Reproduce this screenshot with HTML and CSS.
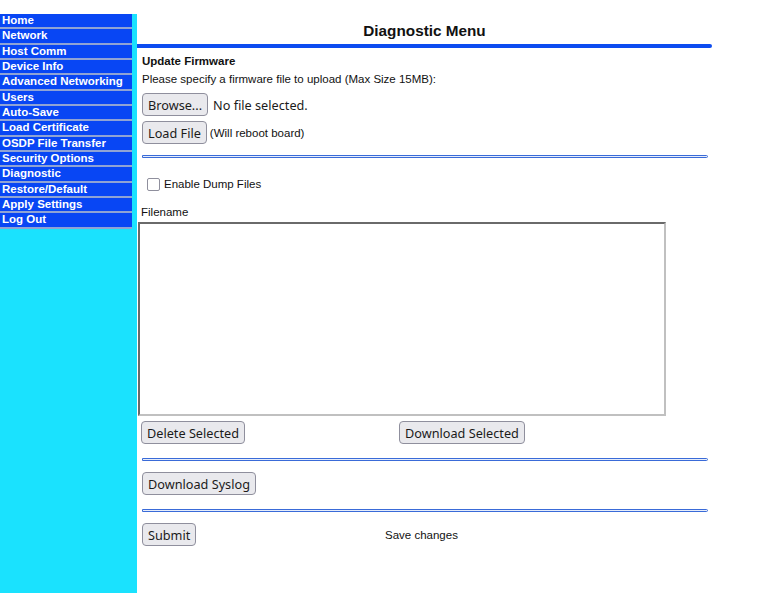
FILE: index.html
```html
<!DOCTYPE html>
<html>
<head>
<meta charset="utf-8">
<title>Diagnostic Menu</title>
<link rel="stylesheet" href="styles.css">
</head>
<body>
<div class="page">
  <nav class="side">
    <a class="item" href="#">Home</a>
    <a class="item" href="#">Network</a>
    <a class="item" href="#">Host Comm</a>
    <a class="item" href="#">Device Info</a>
    <a class="item" href="#">Advanced Networking</a>
    <a class="item" href="#">Users</a>
    <a class="item" href="#">Auto-Save</a>
    <a class="item" href="#">Load Certificate</a>
    <a class="item" href="#">OSDP File Transfer</a>
    <a class="item" href="#">Security Options</a>
    <a class="item" href="#">Diagnostic</a>
    <a class="item" href="#">Restore/Default</a>
    <a class="item" href="#">Apply Settings</a>
    <a class="item" href="#">Log Out</a>
  </nav>
  <main class="main">
    <div class="title">Diagnostic Menu</div>
    <div class="thick"></div>
    <div class="content">
      <div class="section-title">Update Firmware</div>
      <div class="text">Please specify a firmware file to upload (Max Size 15MB):</div>
      <div class="row r-browse"><span class="btn">Browse...</span><span class="file-label">No file selected.</span></div>
      <div class="row r-load"><span class="btn">Load File</span><span class="text">(Will reboot board)</span></div>
      <div class="rule r1"></div>
      <div class="check-row"><span class="check"></span><span class="text">Enable Dump Files</span></div>
    </div>
    <div class="list-wrap">
      <div class="text fname">Filename</div>
      <div class="listbox"></div>
      <div class="list-actions">
        <span class="btn">Delete Selected</span>
        <span class="btn">Download Selected</span>
      </div>
    </div>
    <div class="content">
      <div class="rule r2"></div>
      <div class="row r-syslog"><span class="btn">Download Syslog</span></div>
      <div class="rule r3"></div>
      <div class="submit-row">
        <span class="btn">Submit</span>
        <span class="text">Save changes</span>
      </div>
    </div>
  </main>
</div>
</body>
</html>
```
FILE: styles.css
```css
html, body {
  margin: 0;
  padding: 0;
  background: #ffffff;
}
body {
  font-family: "Liberation Sans", Arial, sans-serif;
  font-size: 11.5px;
  color: #111;
}
.page {
  display: flex;
  padding-top: 14px;
  min-height: 579px;
}
.side {
  width: 132px;
  padding-right: 5px;
  background: #1ae2fe;
  flex: none;
  display: flex;
  flex-direction: column;
  align-self: stretch;
}
.item {
  display: block;
  background: #0846f4;
  color: #ffffff;
  font-weight: bold;
  font-size: 11.5px;
  line-height: 13.33px;
  height: 13.33px;
  padding-left: 2px;
  border-bottom: 2px solid #8fa3d4;
  text-decoration: none;
  white-space: nowrap;
  overflow: hidden;
}
.main {
  width: 575px;
  flex: none;
}
.title {
  margin-top: 7px;
  line-height: 20px;
  font-size: 15.3px;
  font-weight: bold;
  text-align: center;
  color: #111;
}
.thick {
  margin-top: 3px;
  height: 4px;
  background: #0d4cf0;
  border-radius: 0 2px 2px 0;
}
.content {
  padding-left: 5px;
}
.section-title {
  margin-top: 6px;
  font-weight: bold;
  line-height: 14px;
}
.text {
  line-height: 14px;
}
.content > .text {
  margin-top: 4px;
}
.row {
  display: flex;
  align-items: center;
  gap: 5px;
}
.r-browse { margin-top: 7px; }
.r-load { margin-top: 5px; gap: 3px; }
.btn {
  display: inline-flex;
  align-items: center;
  height: 21px;
  padding: 0 5px;
  background: #e9e9ed;
  border: 1px solid #8f8f9d;
  border-radius: 4px;
  font-family: "Noto Sans", "Open Sans", sans-serif;
  font-size: 12.7px;
  color: #1b1b1b;
  white-space: nowrap;
}
.file-label {
  font-family: "Noto Sans", "Open Sans", sans-serif;
  font-size: 12.7px;
  color: #1b1b1b;
}
.rule {
  width: 564px;
  height: 1px;
  border: 1px solid #3a6bd8;
  background: #e6edfb;
  border-radius: 0 2px 2px 0;
}
.r1 { margin-top: 11px; }
.check-row {
  display: flex;
  align-items: center;
  gap: 4px;
  margin-top: 19px;
  padding-left: 5px;
}
.check {
  width: 11px;
  height: 11px;
  border: 1px solid #8f8f9d;
  border-radius: 2px;
  background: #fff;
}
.list-wrap {
  padding-left: 1px;
}
.fname {
  margin-top: 14px;
  padding-left: 3px;
}
.listbox {
  margin-top: 3px;
  width: 524px;
  height: 190px;
  border-style: solid;
  border-width: 2px;
  border-color: #6a6a6a #c0c0c0 #c0c0c0 #6a6a6a;
  background: #fff;
}
.list-actions {
  display: grid;
  grid-template-columns: 258px auto;
  justify-items: start;
  margin-top: 5px;
  padding-left: 3px;
}
.r2 { margin-top: 14px; }
.r-syslog { margin-top: 11px; }
.r3 { margin-top: 14px; }
.submit-row {
  display: grid;
  grid-template-columns: 243px auto;
  justify-items: start;
  align-items: center;
  margin-top: 11px;
}
```
